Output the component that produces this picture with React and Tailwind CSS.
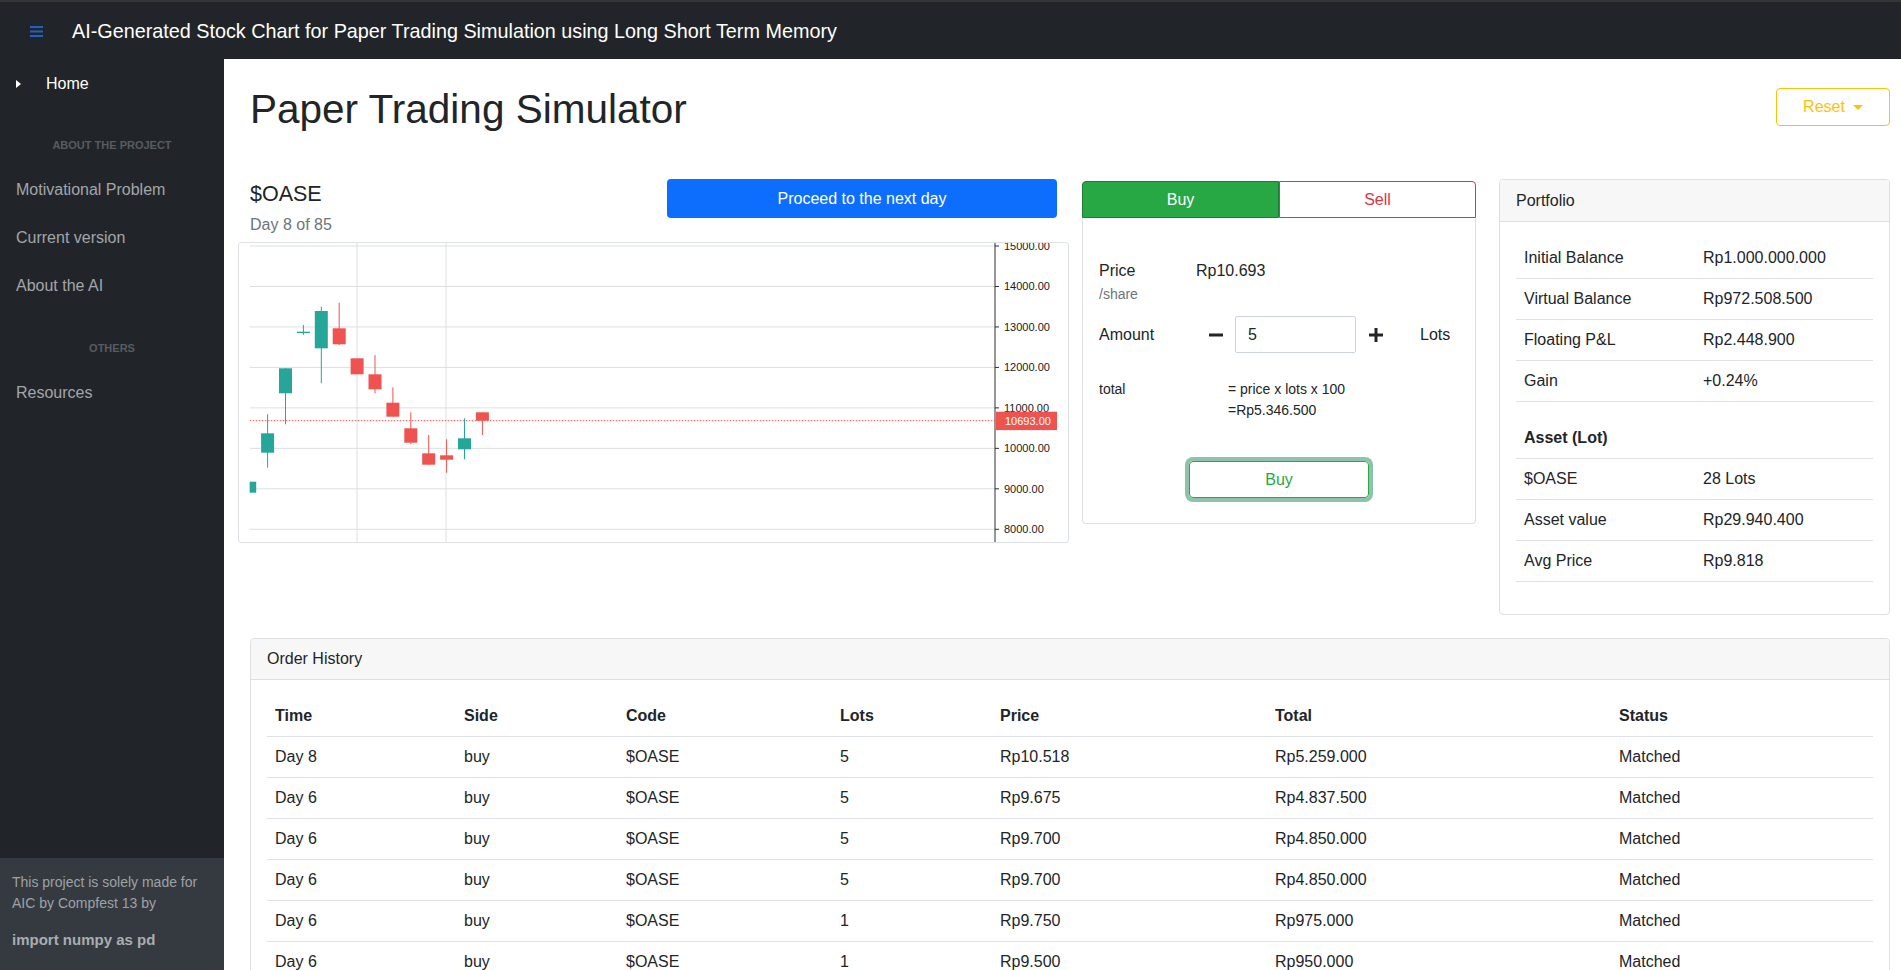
import React from 'react'

const candles = [
  // bodyTop, bodyBottom, wickTop, wickBottom, up
  [239.7, 250.7, 239.7, 250.7, true],
  [191.3, 210.7, 172.3, 225.7, true],
  [126.3, 151.3, 126.3, 182.3, true],
  [89.7, 91, 83, 93, true],
  [69, 106.3, 64.7, 141.3, true],
  [86.3, 102.3, 60.7, 103, false],
  [116.3, 132.3, 116.3, 132.3, false],
  [132.3, 147.3, 113, 151.3, false],
  [160.7, 174.7, 145.3, 174.7, false],
  [186.3, 200.7, 170.3, 202, false],
  [211.3, 222.7, 193, 222.7, false],
  [213.3, 217.7, 197.3, 230.7, false],
  [196.3, 207.3, 176.3, 217.3, true],
  [170.3, 178.7, 170.3, 193, false],
]

const prices = [15000, 14000, 13000, 12000, 11000, 10000, 9000, 8000]

const orders = [
  ['Day 8', 'buy', '$OASE', '5', 'Rp10.518', 'Rp5.259.000'],
  ['Day 6', 'buy', '$OASE', '5', 'Rp9.675', 'Rp4.837.500'],
  ['Day 6', 'buy', '$OASE', '5', 'Rp9.700', 'Rp4.850.000'],
  ['Day 6', 'buy', '$OASE', '5', 'Rp9.700', 'Rp4.850.000'],
  ['Day 6', 'buy', '$OASE', '1', 'Rp9.750', 'Rp975.000'],
  ['Day 6', 'buy', '$OASE', '1', 'Rp9.500', 'Rp950.000'],
  ['Day 5', 'buy', '$OASE', '1', 'Rp9.500', 'Rp950.000'],
]

function Chart() {
  const y = (p) => 4 + (15000 - p) * 0.04047
  return (
    <svg width="829" height="299" className="block">
      <defs>
        <clipPath id="plot">
          <rect x="11.8" y="0" width="745" height="310" />
        </clipPath>
      </defs>
      <g transform="translate(-1,-1)">
        {prices.map((p) => (
          <line key={p} x1="11.8" x2="757" y1={y(p)} y2={y(p)} stroke="#dcdfe2" strokeWidth="1" />
        ))}
        <line x1="119" x2="119" y1="0" y2="310" stroke="#dcdfe2" />
        <line x1="208" x2="208" y1="0" y2="310" stroke="#dcdfe2" />
        <line x1="757" x2="757" y1="0" y2="310" stroke="#2e2e2e" />
        {prices.map((p) => (
          <g key={'l' + p}>
            <line x1="757" x2="761" y1={y(p)} y2={y(p)} stroke="#2e2e2e" />
            <text x="766" y={y(p) + 4} fontSize="11" fill="#191919" fontFamily="Liberation Sans, Arial, sans-serif">
              {p.toFixed(2)}
            </text>
          </g>
        ))}
        <line x1="11.8" x2="757" y1="178.7" y2="178.7" stroke="#ef5350" strokeDasharray="1.5 1.5" />
        <g clipPath="url(#plot)">
          {candles.map(([bt, bb, wt, wb, up], i) => {
            const cx = 11.7 + 17.9 * i
            const c = up ? '#26a69a' : '#ef5350'
            return (
              <g key={i}>
                <line x1={cx} x2={cx} y1={wt} y2={wb} stroke={c} strokeWidth="1" />
                <rect x={cx - 6.5} y={bt} width="13" height={Math.max(bb - bt, 1.3)} fill={c} />
              </g>
            )
          })}
        </g>
        <rect x="758" y="169.7" width="61" height="18.4" fill="#ef5350" />
        <text x="767" y="182.6" fontSize="11" fill="#ffffff" fontFamily="Liberation Sans, Arial, sans-serif">
          10693.00
        </text>
      </g>
    </svg>
  )
}

function Sidebar() {
  return (
    <aside className="w-[224px] shrink-0 bg-[#212529] flex flex-col">
      <div className="pt-[13px]">
        <div className="flex items-center h-6 text-white text-[16px] leading-6">
          <svg width="5" height="8" viewBox="0 0 5 8" className="ml-[16px]">
            <path d="M0 0 L5 4 L0 8 Z" fill="#ffffff" />
          </svg>
          <span className="ml-[25px]">Home</span>
        </div>
        <div className="mt-[41px] h-4 leading-4 text-center text-[11px] font-bold uppercase text-[#575c61]">
          About the project
        </div>
        <div className="mt-[25px] pl-[16px] text-[16px] leading-6 text-[#a3a6a9]">Motivational Problem</div>
        <div className="mt-[24px] pl-[16px] text-[16px] leading-6 text-[#a3a6a9]">Current version</div>
        <div className="mt-[24px] pl-[16px] text-[16px] leading-6 text-[#a3a6a9]">About the AI</div>
        <div className="mt-[42px] h-4 leading-4 text-center text-[11px] font-bold uppercase text-[#575c61]">
          Others
        </div>
        <div className="mt-[25px] pl-[16px] text-[16px] leading-6 text-[#a3a6a9]">Resources</div>
      </div>
      <div className="mt-auto h-[112px] bg-[#343a40] px-3 pt-[14px]">
        <p className="text-[14px] leading-[21px] text-[#9ea2a6]">
          This project is solely made for AIC by Compfest 13 by
        </p>
        <p className="mt-[15px] text-[15px] leading-[22px] font-bold text-[#a9adb0]">import numpy as pd</p>
      </div>
    </aside>
  )
}

function OrderPanel() {
  return (
    <div className="ml-[13px] w-[394px] shrink-0 mt-[2px]">
      <div className="flex h-[37px] text-[16px]">
        <button className="flex-1 bg-[#28a745] border border-[#1e7e34] text-white rounded-tl-[4px]">Buy</button>
        <button className="flex-1 bg-white border border-[#dc3545] text-[#dc3545] rounded-tr-[4px]">Sell</button>
      </div>
      <div className="border border-t-0 border-[#dfdfdf] rounded-b-[4px] h-[306px] px-[16px] pt-[41px]">
        <div className="flex text-[16px] leading-6">
          <div className="w-[97px]">Price</div>
          <div>Rp10.693</div>
        </div>
        <div className="mt-[1px] text-[14px] leading-5 text-[#6c757d]">/share</div>
        <div className="mt-[12px] flex items-center h-[37px] text-[16px]">
          <div className="w-[110px]">Amount</div>
          <svg width="14" height="14" viewBox="0 0 14 14">
            <rect x="0" y="5.5" width="14" height="3" fill="#212529" />
          </svg>
          <div className="ml-[12px] w-[121px] h-[37px] border border-[#ced4da] rounded-[2px] flex items-center pl-[12px]">
            5
          </div>
          <svg width="14" height="14" viewBox="0 0 14 14" className="ml-[13px]">
            <rect x="0" y="5.5" width="14" height="3" fill="#212529" />
            <rect x="5.5" y="0" width="3" height="14" fill="#212529" />
          </svg>
          <div className="ml-[37px]">Lots</div>
        </div>
        <div className="mt-[26px] flex text-[14px] leading-[21px]">
          <div className="w-[129px]">total</div>
          <div>
            <div>= price x lots x 100</div>
            <div>=Rp5.346.500</div>
          </div>
        </div>
        <button className="mt-[40px] mx-auto block w-[180px] h-[37px] border border-[#28a745] rounded-[4px] text-[16px] text-[#28a745] shadow-[0_0_0_4px_rgba(25,135,84,0.5)]">
          Buy
        </button>
      </div>
    </div>
  )
}

function Row({ label, value, bold }) {
  return (
    <tr className="border-b border-[#dee2e6]">
      <td className={'w-[179px] px-2 py-2 leading-6 ' + (bold ? 'font-bold' : '')}>{label}</td>
      <td className="px-2 py-2 leading-6">{value}</td>
    </tr>
  )
}

function Portfolio() {
  return (
    <div className="ml-[23px] flex-1 min-w-0 border border-[#dfdfdf] rounded-[4px] overflow-hidden">
      <div className="h-[42px] bg-[#f7f7f7] border-b border-[#dfdfdf] flex items-center pl-[16px] text-[16px]">
        Portfolio
      </div>
      <div className="p-4 text-[16px]">
        <table className="w-full table-fixed border-collapse mb-4">
          <tbody>
            <Row label="Initial Balance" value="Rp1.000.000.000" />
            <Row label="Virtual Balance" value="Rp972.508.500" />
            <Row label="Floating P&L" value="Rp2.448.900" />
            <Row label="Gain" value="+0.24%" />
          </tbody>
        </table>
        <table className="w-full table-fixed border-collapse mb-4">
          <tbody>
            <Row label="Asset (Lot)" value="" bold />
            <Row label="$OASE" value="28 Lots" />
            <Row label="Asset value" value="Rp29.940.400" />
            <Row label="Avg Price" value="Rp9.818" />
          </tbody>
        </table>
      </div>
    </div>
  )
}

function OrderHistory() {
  const heads = ['Time', 'Side', 'Code', 'Lots', 'Price', 'Total', 'Status']
  const widths = ['w-[189px]', 'w-[162px]', 'w-[214px]', 'w-[160px]', 'w-[275px]', 'w-[344px]', '']
  return (
    <div className="mt-[23px] border border-[#dfdfdf] rounded-[4px]">
      <div className="h-[41px] bg-[#f7f7f7] border-b border-[#dfdfdf] flex items-center pl-[16px] text-[16px] rounded-t-[4px]">
        Order History
      </div>
      <div className="p-4 text-[16px]">
        <table className="w-full table-fixed border-collapse">
          <thead>
            <tr className="border-b border-[#dee2e6]">
              {heads.map((h, i) => (
                <th key={h} className={'text-left font-bold px-2 py-2 leading-6 ' + widths[i]}>
                  {h}
                </th>
              ))}
            </tr>
          </thead>
          <tbody>
            {orders.map((o, i) => (
              <tr key={i} className="border-b border-[#dee2e6]">
                {o.map((c, j) => (
                  <td key={j} className="px-2 py-2 leading-6">
                    {c}
                  </td>
                ))}
                <td className="px-2 py-2 leading-6">Matched</td>
              </tr>
            ))}
          </tbody>
        </table>
      </div>
    </div>
  )
}

export default function App() {
  return (
    <div className="h-screen overflow-hidden flex flex-col bg-white text-[#212529] font-['Liberation_Sans',Arial,sans-serif]">
      <header className="h-[59px] shrink-0 bg-[#212529] border-t-2 border-[#353535] flex items-center">
        <svg width="13" height="11" viewBox="0 0 13 11" className="ml-[30px] mt-[2px]">
          <rect x="0" y="0" width="13" height="2" fill="#1d62c9" />
          <rect x="0" y="4.5" width="13" height="2" fill="#1d62c9" />
          <rect x="0" y="9" width="13" height="2" fill="#1d62c9" />
        </svg>
        <span className="ml-[29px] mt-[3px] text-white text-[19.8px]">
          AI-Generated Stock Chart for Paper Trading Simulation using Long Short Term Memory
        </span>
      </header>
      <div className="flex flex-1 min-h-0">
        <Sidebar />
        <main className="flex-1 min-w-0 overflow-hidden pl-[26px] pr-[11px] pt-[26px]">
          <div className="flex justify-between items-start">
            <h1 className="text-[40.5px] leading-[49px]">Paper Trading Simulator</h1>
            <button className="mt-[3px] w-[114px] h-[38px] border border-[#ffc107] rounded-[4px] text-[#ffc107] text-[16px] flex items-center justify-center">
              Reset
              <span className="ml-[8px] w-0 h-0 border-x-[5px] border-x-transparent border-t-[5px] border-t-[#ffc107]" />
            </button>
          </div>
          <div className="mt-[45px] flex items-start">
            <div className="-ml-[12px] w-[831px] shrink-0">
              <div className="flex justify-between px-3">
                <div className="pt-[1px]">
                  <div className="text-[21.5px] leading-[28px]">$OASE</div>
                  <div className="mt-[5px] text-[16px] leading-6 text-[#6c757d]">Day 8 of 85</div>
                </div>
                <button className="w-[390px] h-[39px] rounded-[4px] bg-[#0d6efd] text-white text-[16px]">
                  Proceed to the next day
                </button>
              </div>
              <div className="mt-[5px] h-[301px] border border-[#dee2e6] rounded-[3px] overflow-hidden">
                <Chart />
              </div>
            </div>
            <OrderPanel />
            <Portfolio />
          </div>
          <OrderHistory />
        </main>
      </div>
    </div>
  )
}
